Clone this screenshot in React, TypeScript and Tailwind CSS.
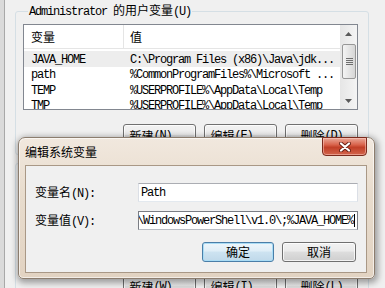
import type { ReactNode } from "react";

const mono = "font-['Liberation_Mono','DejaVu_Sans_Mono',monospace] tracking-[-1.2px]";
const face = "bg-[linear-gradient(#f2f2f2,#ebebeb_45%,#dddddd_50%,#cfcfcf)]";

const userVars = [
  ["JAVA_HOME", "C:\\Program Files (x86)\\Java\\jdk..."],
  ["path", "%CommonProgramFiles%\\Microsoft ..."],
  ["TEMP", "%USERPROFILE%\\AppData\\Local\\Temp"],
  ["TMP", "%USERPROFILE%\\AppData\\Local\\Temp"],
];

function M({ children }: { children: ReactNode }) {
  return <span className={mono}>{children}</span>;
}

function WinButton({ children, className = "" }: { children: ReactNode; className?: string }) {
  return (
    <div
      className={`flex h-[23px] w-[73px] items-center justify-center rounded-[3px] border border-[#707070] ${face} shadow-[inset_0_0_0_1px_rgba(255,255,255,0.75)] ${className}`}
    >
      {children}
    </div>
  );
}

function ScrollBar() {
  return (
    <div className="flex w-[17px] flex-col bg-[linear-gradient(90deg,#e6e6e6,#f4f4f4)]">
      <div className="flex h-[17px] items-center justify-center">
        <svg width="7" height="4" viewBox="0 0 7 4">
          <path d="M0 4L3.5 0L7 4Z" fill="#5a5a5a" />
        </svg>
      </div>
      <div className="mt-[2px] ml-[2px] mr-[1px] flex h-[35px] items-center justify-center rounded-[2px] border border-[#979797] bg-[linear-gradient(90deg,#f4f4f4,#e2e2e2_60%,#d6d6d6)]">
        <svg width="7" height="7" viewBox="0 0 7 7">
          <path d="M0 0.5H7M0 2.5H7M0 4.5H7M0 6.5H7" stroke="#6e6e6e" strokeWidth="1" />
        </svg>
      </div>
      <div className="flex-1" />
      <div className="flex h-[17px] items-center justify-center">
        <svg width="7" height="4" viewBox="0 0 7 4">
          <path d="M0 0L3.5 4L7 0Z" fill="#5a5a5a" />
        </svg>
      </div>
    </div>
  );
}

function ButtonsRow({ labels }: { labels: [ReactNode, ReactNode, ReactNode] }) {
  return (
    <div className="mt-[14px] flex w-[335px] justify-end gap-[8px]">
      <WinButton>{labels[0]}</WinButton>
      <WinButton>{labels[1]}</WinButton>
      <WinButton>{labels[2]}</WinButton>
    </div>
  );
}

function EditDialog() {
  return (
    <div className="absolute left-[18px] top-[137px] flex h-[142px] w-[357px] flex-col rounded-t-[7px] rounded-b-[5px] border border-[#8c7d6e] bg-[linear-gradient(#f1e8de,#e8dccd_40%,#e2d3c2)] shadow-[1px_2px_6px_2px_rgba(0,0,0,0.35),inset_0_0_0_1px_rgba(255,255,255,0.6)]">
      <div className="flex h-[27px] items-start">
        <div className="flex h-full flex-1 items-center pl-[6px]">编辑系统变量</div>
        <div className="mr-[7px] -mt-[1px] flex h-[19px] w-[45px] items-center justify-center rounded-b-[4px] border border-[#7b2a1c] bg-[linear-gradient(#eaa898,#d9634b_40%,#c13f27_55%,#d2654c)] shadow-[inset_0_0_0_1px_rgba(255,210,200,0.5)]">
          <svg width="12" height="10" viewBox="0 0 12 10">
            <path d="M2 1.5L10 8.5M10 1.5L2 8.5" stroke="#6a2014" strokeWidth="4" strokeLinecap="round" />
            <path d="M2 1.5L10 8.5M10 1.5L2 8.5" stroke="#ffffff" strokeWidth="2.2" strokeLinecap="round" />
          </svg>
        </div>
      </div>
      <div className="ml-[6px] mr-[7px] flex h-[108px] flex-col border border-[#a99886] bg-[#f0f0f0] pl-[9px] pr-[8px] pt-[17px]">
        <div className="flex h-[19px] items-center">
          <div className="w-[103px] whitespace-nowrap">
            变量名<M>(N):</M>
          </div>
          <div className="flex h-[19px] w-[220px] items-center border border-[#abadb3] border-l-[#dbdfe6] border-r-[#dbdfe6] border-b-[#e3e9ef] bg-white pl-[2px]">
            <M>Path</M>
          </div>
        </div>
        <div className="mt-[9px] flex h-[19px] items-center">
          <div className="w-[103px] whitespace-nowrap">
            变量值<M>(V):</M>
          </div>
          <div className="flex h-[19px] w-[220px] items-center justify-end overflow-hidden whitespace-nowrap border border-[#7a7d84] border-b-[#b9bdc4] bg-white pr-[2px]">
            <M>%SystemRoot%\system32\WindowsPowerShell\v1.0\;%JAVA_HOME%</M>
            <span className="ml-[1px] h-[13px] w-[1px] shrink-0 bg-black" />
          </div>
        </div>
        <div className="mt-[12px] flex justify-end gap-[8px] pr-[2px]">
          <div className="flex h-[20px] w-[72px] items-center justify-center rounded-[3px] border border-[#4a7ea8] bg-[linear-gradient(#eef6fb,#dfeef7_45%,#cde3f1_50%,#c0d9ea)] shadow-[inset_0_0_0_1px_#a9dcf5]">
            确定
          </div>
          <div className={`flex h-[20px] w-[74px] items-center justify-center rounded-[3px] border border-[#707070] ${face} shadow-[inset_0_0_0_1px_rgba(255,255,255,0.75)]`}>
            取消
          </div>
        </div>
      </div>
    </div>
  );
}

export default function App() {
  return (
    <div className="relative flex h-[288px] w-[385px] overflow-hidden bg-[#f0f0f0] font-['Noto_Sans_CJK_SC',sans-serif] text-[12px] leading-[14px] text-black">
      <div className="h-full w-[5px] border-r border-[#a8a8a8] bg-[#dadada]" />
      <div className="flex flex-col pl-[10px] pt-[4px]">
        <fieldset className="w-[354px] rounded-[3px] border border-[#d5dfe5] pb-[7px] pl-[7px]">
          <legend className="ml-[5px] px-[1px] leading-[12px]">
            <M>Administrator </M>的用户变量<M>(U)</M>
          </legend>
          <div className="mt-[6px] flex h-[86px] w-[335px] border border-[#828790] bg-white">
            <div className="flex w-[316px] flex-col overflow-hidden">
              <div className="flex h-[24px] shrink-0 border-b border-[#e5e5e5]">
                <div className="flex w-[100px] items-center border-r border-[#e5e5e5] pl-[7px]">变量</div>
                <div className="flex items-center pl-[6px]">值</div>
              </div>
              <div className="pt-[2px]">
                {userVars.map(([name, value], i) => (
                  <div
                    key={name}
                    className={`flex h-[15.5px] items-center whitespace-nowrap ${i === 0 ? "bg-[#ededed]" : ""}`}
                  >
                    <div className="w-[100px] shrink-0 pl-[7px]">
                      <M>{name}</M>
                    </div>
                    <div className="pl-[6px]">
                      <M>{value}</M>
                    </div>
                  </div>
                ))}
              </div>
            </div>
            <ScrollBar />
          </div>
          <ButtonsRow
            labels={[
              <>新建<M> (N)...</M></>,
              <>编辑<M> (E)...</M></>,
              <>删除<M> (D)</M></>,
            ]}
          />
        </fieldset>
        <fieldset className="mt-[1px] w-[354px] rounded-[3px] border border-[#d5dfe5] pb-[7px] pl-[7px]">
          <legend className="ml-[5px] px-[1px] leading-[12px]">
            系统变量<M>(S)</M>
          </legend>
          <div className="mt-[6px] h-[85px] w-[335px] border border-[#828790] bg-white" />
          <ButtonsRow
            labels={[
              <>新建<M> (W)...</M></>,
              <>编辑<M> (I)...</M></>,
              <>删除<M> (L)</M></>,
            ]}
          />
        </fieldset>
      </div>
      <EditDialog />
    </div>
  );
}
